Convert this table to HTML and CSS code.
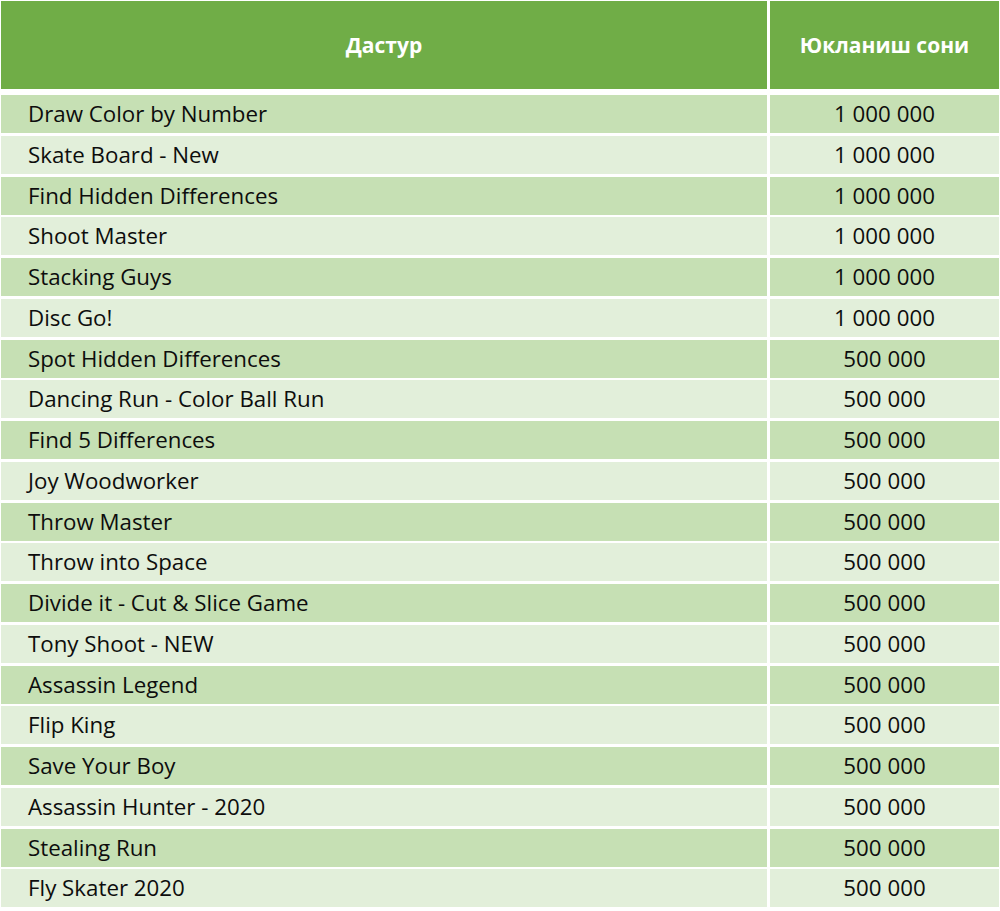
FILE: index.html
```html
<!DOCTYPE html>
<html lang="uz">
<head>
<meta charset="utf-8">
<title>Дастур</title>
<link rel="stylesheet" href="styles.css">
</head>
<body>
<div class="table">
  <div class="head">
    <div class="hcell">Дастур</div>
    <div class="hcell">Юкланиш сони</div>
  </div>
  <div class="rows">
    <div class="row"><div class="name">Draw Color by Number</div><div class="num">1 000 000</div></div>
    <div class="row"><div class="name">Skate Board - New</div><div class="num">1 000 000</div></div>
    <div class="row"><div class="name">Find Hidden Differences</div><div class="num">1 000 000</div></div>
    <div class="row"><div class="name">Shoot Master</div><div class="num">1 000 000</div></div>
    <div class="row"><div class="name">Stacking Guys</div><div class="num">1 000 000</div></div>
    <div class="row"><div class="name">Disc Go!</div><div class="num">1 000 000</div></div>
    <div class="row"><div class="name">Spot Hidden Differences</div><div class="num">500 000</div></div>
    <div class="row"><div class="name">Dancing Run - Color Ball Run</div><div class="num">500 000</div></div>
    <div class="row"><div class="name">Find 5 Differences</div><div class="num">500 000</div></div>
    <div class="row"><div class="name">Joy Woodworker</div><div class="num">500 000</div></div>
    <div class="row"><div class="name">Throw Master</div><div class="num">500 000</div></div>
    <div class="row"><div class="name">Throw into Space</div><div class="num">500 000</div></div>
    <div class="row"><div class="name">Divide it - Cut &amp; Slice Game</div><div class="num">500 000</div></div>
    <div class="row"><div class="name">Tony Shoot - NEW</div><div class="num">500 000</div></div>
    <div class="row"><div class="name">Assassin Legend</div><div class="num">500 000</div></div>
    <div class="row"><div class="name">Flip King</div><div class="num">500 000</div></div>
    <div class="row"><div class="name">Save Your Boy</div><div class="num">500 000</div></div>
    <div class="row"><div class="name">Assassin Hunter - 2020</div><div class="num">500 000</div></div>
    <div class="row"><div class="name">Stealing Run</div><div class="num">500 000</div></div>
    <div class="row"><div class="name">Fly Skater 2020</div><div class="num">500 000</div></div>
  </div>
</div>
</body>
</html>
```
FILE: styles.css
```css
html, body {
  margin: 0;
  padding: 0;
  background: #ffffff;
}
body {
  font-family: "Open Sans", "Lato", sans-serif;
  color: #0d0d0d;
}
.table {
  width: 1000px;
  box-sizing: border-box;
  padding: 1px 1px 0 1px;
  display: flex;
  flex-direction: column;
  gap: 6px;
}
.head, .row {
  display: grid;
  grid-template-columns: 766px 1fr;
  column-gap: 3px;
}
.hcell {
  background: #70ad47;
  height: 88px;
  display: flex;
  align-items: center;
  justify-content: center;
  color: #ffffff;
  font-weight: 700;
  font-size: 21px;
}
.rows {
  display: flex;
  flex-direction: column;
  gap: 2.75px;
}
.row .name, .row .num {
  height: 38px;
  display: flex;
  align-items: center;
  font-size: 22.3px;
  padding-bottom: 1px;
  box-sizing: border-box;
}
.row .name {
  padding-left: 27px;
}
.row .num {
  justify-content: center;
}
.row:nth-child(odd) .name, .row:nth-child(odd) .num {
  background: #c6e0b4;
}
.row:nth-child(even) .name, .row:nth-child(even) .num {
  background: #e2efda;
}
```
